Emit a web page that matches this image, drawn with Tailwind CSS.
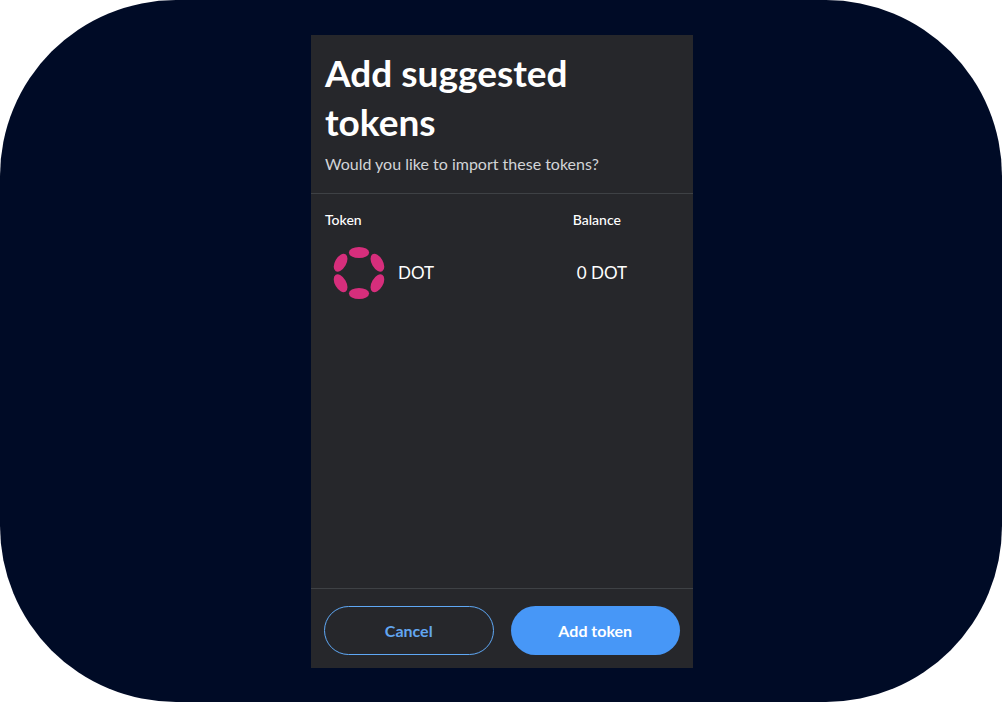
<!DOCTYPE html>
<html lang="en">
<head>
<meta charset="utf-8">
<meta name="viewport" content="width=device-width, initial-scale=1">
<title>Add suggested tokens</title>
<script src="https://cdn.jsdelivr.net/npm/@tailwindcss/browser@4"></script>
</head>
<body class="bg-white font-['Lato','Open_Sans',sans-serif]">
<div class="flex min-h-screen justify-center rounded-[176px] bg-[#000b26] pt-[35px] pb-[34px] pl-0.5">
  <main class="flex w-full max-w-[382px] flex-col bg-[#26272b] text-white">
    <header class="border-b border-[#3e4145] px-3.5 pt-[13px] pb-[17px]">
      <h1 class="text-[37px] leading-[49px] font-bold">Add suggested tokens</h1>
      <p class="mt-1.5 text-base leading-6 text-[#d2d4d7]">Would you like to import these tokens?</p>
    </header>
    <section class="flex-1 px-3.5 pt-4">
      <table class="w-full table-fixed text-left">
        <thead>
          <tr class="text-sm leading-5">
            <th scope="col" class="w-[70%] font-medium">Token</th>
            <th scope="col" class="font-medium">Balance</th>
          </tr>
        </thead>
        <tbody>
          <tr class="text-[17px]">
            <td class="pt-4">
              <div class="flex items-center gap-3 pl-[7px]">
                <svg class="size-[54px]" viewBox="0 0 54 54" fill="#d62e7c" aria-hidden="true">
                  <ellipse cx="27" cy="6.5" rx="10.1" ry="5.6"/>
                  <ellipse cx="27" cy="47.5" rx="10.1" ry="5.6"/>
                  <ellipse cx="8.6" cy="16.8" rx="9.8" ry="5.6" transform="rotate(-60 8.6 16.8)"/>
                  <ellipse cx="45.4" cy="37.2" rx="9.8" ry="5.6" transform="rotate(-60 45.4 37.2)"/>
                  <ellipse cx="45.4" cy="16.8" rx="9.8" ry="5.6" transform="rotate(60 45.4 16.8)"/>
                  <ellipse cx="8.6" cy="37.2" rx="9.8" ry="5.6" transform="rotate(60 8.6 37.2)"/>
                </svg>
                <span>DOT</span>
              </div>
            </td>
            <td class="pt-4 pl-1">0 DOT</td>
          </tr>
        </tbody>
      </table>
    </section>
    <footer class="grid grid-cols-2 gap-[17px] border-t border-[#3e4145] px-[13px] pt-[17px] pb-[13px] text-base font-bold">
      <button type="button" class="h-[49px] rounded-full border border-[#5fa8f5] text-[#62a6f0]">Cancel</button>
      <button type="button" class="h-[49px] rounded-full bg-[#4797f7] text-white">Add token</button>
    </footer>
  </main>
</div>
</body>
</html>
